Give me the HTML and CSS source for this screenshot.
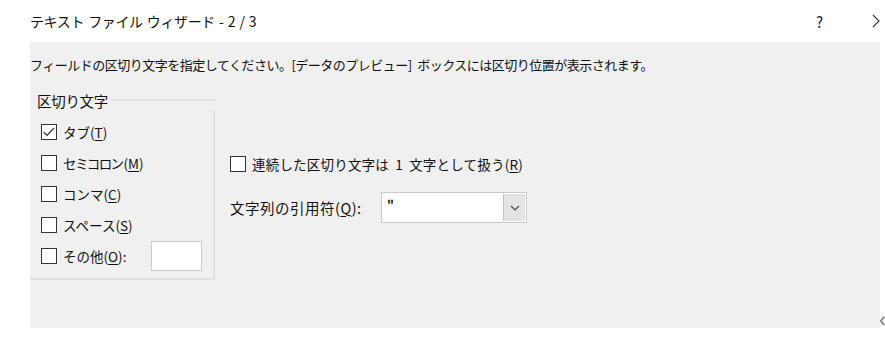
FILE: index.html
```html
<!DOCTYPE html>
<html lang="ja">
<head>
<meta charset="utf-8">
<link rel="stylesheet" href="styles.css">
</head>
<body>
<div class="titlebar">
  <span class="title">テキスト ファイル ウィザード - 2 / 3</span>
  <span class="help">?</span>
  <svg class="chev" width="8" height="14" viewBox="0 0 8 14"><polyline points="1,1 7,7 1,13" fill="none" stroke="#333" stroke-width="1.1"/></svg>
</div>
<div class="main">
  <div class="panel">
    <div class="instr">フィールドの区切り文字を指定してください。[データのプレビュー] ボックスには区切り位置が表示されます。</div>
    <div class="content">
      <div class="group">
        <div class="group-head"><span class="group-label">区切り文字</span><span class="group-line"></span></div>
        <div class="group-body">
          <div class="row"><span class="cb"><svg width="16" height="16" viewBox="0 0 16 16"><polyline points="2.5,8 6,11.5 13,4" fill="none" stroke="#333" stroke-width="1.2"/></svg></span><span class="lbl">タブ(<u>T</u>)</span></div>
          <div class="row"><span class="cb"></span><span class="lbl"><span class="narrow">セミコロン</span>(<u>M</u>)</span></div>
          <div class="row"><span class="cb"></span><span class="lbl">コンマ(<u>C</u>)</span></div>
          <div class="row"><span class="cb"></span><span class="lbl">スペース(<u>S</u>)</span></div>
          <div class="row"><span class="cb"></span><span class="lbl">その他(<u>O</u>):</span><span class="textbox"></span></div>
        </div>
      </div>
      <div class="right">
        <div class="row consec"><span class="cb"></span><span class="lbl wide">連続した区切り文字は 1 文字として扱う(<u>R</u>)</span></div>
        <div class="quote-row">
          <span class="lbl quote-lbl">文字列の引用符(<u>Q</u>):</span>
          <div class="combo"><span class="combo-val">"</span><span class="combo-btn"><svg width="10" height="6" viewBox="0 0 10 6"><polyline points="1,1 5,5 9,1" fill="none" stroke="#444" stroke-width="1.1"/></svg></span></div>
        </div>
      </div>
    </div>
  </div>
  <div class="edge"><svg width="6" height="12" viewBox="0 0 6 12"><polyline points="5,1 1,6 5,11" fill="none" stroke="#8a8a8a" stroke-width="2.4"/></svg></div>
</div>
</body>
</html>
```
FILE: styles.css
```css
html, body { margin: 0; padding: 0; background: #fff; }
body {
  width: 885px; height: 340px; overflow: hidden;
  font-family: "Noto Sans CJK JP", "Noto Sans", sans-serif;
  font-size: 13.5px; color: #111;
}
.titlebar {
  height: 42px; display: flex; align-items: center;
  padding-left: 30px; box-sizing: border-box;
}
.title { font-size: 14px; letter-spacing: -0.4px; word-spacing: 1.5px; flex: 1; }
.help { font-size: 15px; width: 20px; margin-right: 36px; color: #222; }
.chev { margin-right: 5px; }
.main { display: flex; }
.panel {
  margin-left: 30px; width: 850px; height: 286px;
  background: #f0f0f0;
}
.edge { width: 5px; overflow: hidden; display: flex; align-items: flex-end; padding-bottom: 1px; box-sizing: border-box; }
.instr {
  margin-top: 13px; height: 20px; line-height: 20px;
  font-size: 13px; letter-spacing: -0.5px; word-spacing: 3px; white-space: nowrap;
}
.content { display: flex; margin-top: 15px; }
.group { width: 185px; }
.group-head { display: flex; align-items: center; height: 20px; }
.group-label { padding-left: 7px; padding-right: 3px; line-height: 20px; margin-top: 2px; font-size: 14.5px; letter-spacing: -0.3px; }
.group-line { flex: 1; height: 2px; background: #e2e2e2; }
.group-body {
  border-right: 2px solid #e2e2e2; border-bottom: 2px solid #e2e2e2;
  padding: 6px 0 7px 11px;
}
.row { display: flex; align-items: center; height: 31px; }
.cb {
  width: 14px; height: 14px; border: 1px solid #333; background: #fff;
  display: inline-flex; flex: none;
}
.cb svg { margin: -1px; }
.lbl { margin-left: 6px; white-space: nowrap; line-height: 20px; }
.narrow { letter-spacing: -1.6px; margin-right: 1px; }
.wide { letter-spacing: 0.2px; word-spacing: 3px; }
u { text-decoration-thickness: 1px; text-underline-offset: 2px; }
.textbox {
  width: 49px; height: 28px; margin-left: 25px;
  background: #fff; border: 1px solid #c9c9c9;
}
.right { margin-left: 15px; }
.consec { margin-top: 58px; height: 31px; }
.quote-row { display: flex; align-items: center; margin-top: 13px; }
.quote-lbl { margin-left: 0; width: 151px; font-size: 14.5px; letter-spacing: 0.5px; }
.combo {
  width: 144px; height: 29px; border: 1px solid #c9c9c9; background: #fff;
  display: flex; align-items: stretch;
}
.combo-val { flex: 1; padding-left: 5px; font-weight: bold; font-size: 12px; line-height: 24px; }
.combo-btn {
  width: 21px; margin: 1px; background: #e3e3e3; border-left: 1px solid #c2c2c2;
  display: flex; align-items: center; justify-content: center;
}
```
